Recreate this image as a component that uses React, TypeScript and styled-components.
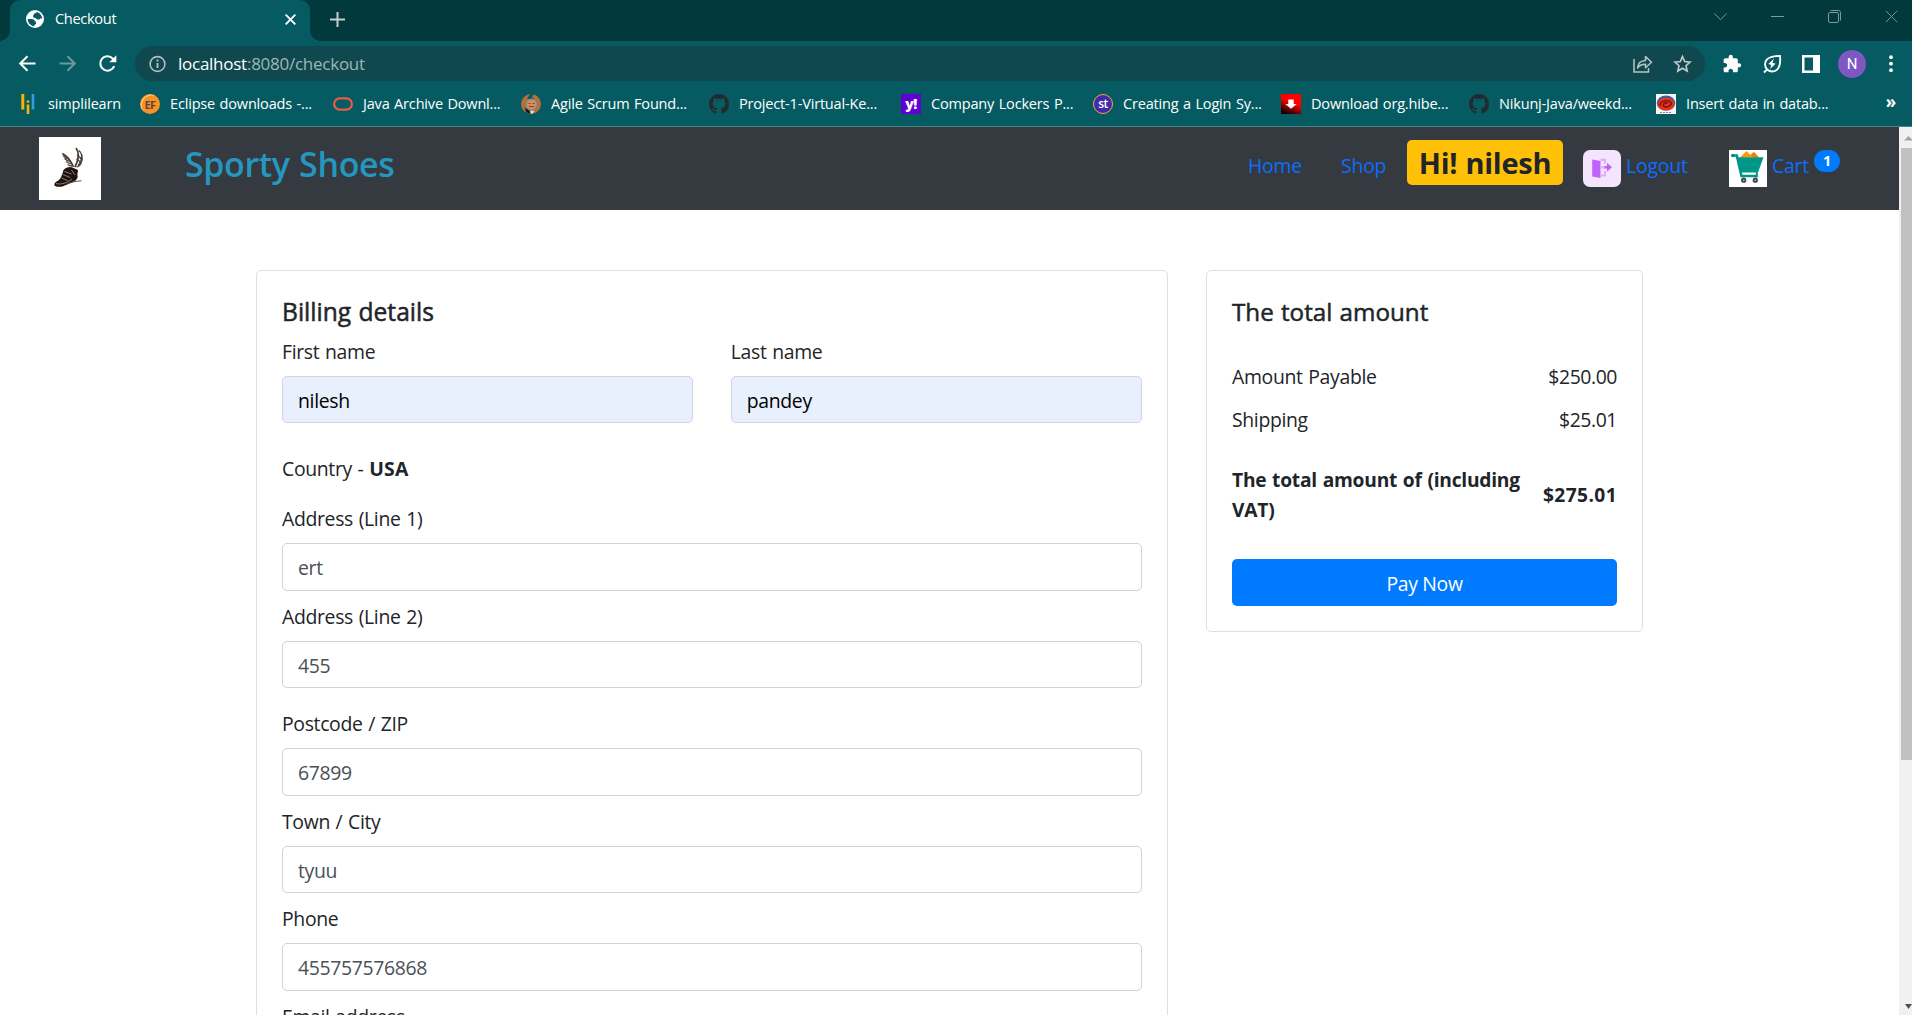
import React from 'react';
import styled, { createGlobalStyle } from 'styled-components';

const GlobalStyle = createGlobalStyle`
  * { box-sizing: border-box; }
  html, body { margin: 0; padding: 0; overflow: hidden; background: #fff; }
  body {
    font-family: "Open Sans", "Noto Sans", sans-serif;
    font-size: 19.4px;
    line-height: 30px;
    letter-spacing: -0.017em;
    word-spacing: 0.05em;
    color: #212529;
  }
  svg { display: block; flex: none; }
`;

const Window = styled.div`
  width: 1912px;
  height: 1015px;
  display: flex;
  flex-direction: column;
  overflow: hidden;
`;

/* ---------- browser chrome ---------- */

const TabStrip = styled.div`
  height: 41px;
  flex: none;
  display: flex;
  align-items: flex-start;
  background: #02393d;
`;

const Tab = styled.div`
  position: relative;
  width: 300px;
  height: 41px;
  margin-left: 10px;
  padding: 0 14px 3px 16px;
  display: flex;
  align-items: center;
  gap: 11px;
  background: #055b61;
  border-radius: 10px 10px 0 0;

  &::before,
  &::after {
    content: "";
    position: absolute;
    bottom: 0;
    width: 10px;
    height: 10px;
  }
  &::before {
    left: -10px;
    background: radial-gradient(circle at 0 0, transparent 9.5px, #055b61 10px);
  }
  &::after {
    right: -10px;
    background: radial-gradient(circle at 100% 0, transparent 9.5px, #055b61 10px);
  }
`;

const TabTitle = styled.span`
  flex: 1;
  padding-bottom: 2px;
  font-size: 14.6px;
  line-height: 20px;
  color: #fff;
`;

const NewTab = styled.div`
  margin: 12px 0 0 20px;
`;

const WindowControls = styled.div`
  margin: 10px 14px 0 auto;
  display: flex;
  gap: 44px;
`;

const Toolbar = styled.div`
  height: 43px;
  flex: none;
  display: flex;
  align-items: center;
  padding: 2px 18px 0 18px;
  background: #055b61;
`;

const NavButtons = styled.div`
  display: flex;
  gap: 20px;
  width: 117px;
`;

const AddressBar = styled.div`
  width: 1570px;
  height: 35px;
  padding: 0 12px 0 12px;
  display: flex;
  align-items: center;
  border-radius: 18px;
  background: #0f484e;
`;

const Url = styled.span`
  flex: 1;
  margin-left: 11px;
  font-size: 17px;
  line-height: 24px;
  letter-spacing: -0.015em;
  color: #9fb6b8;

  b {
    font-weight: 400;
    color: #fff;
  }
`;

const AddressActions = styled.div`
  display: flex;
  gap: 20px;
`;

const Extensions = styled.div`
  flex: 1;
  margin-left: 17px;
  display: flex;
  align-items: center;
  gap: 20px;
`;

const Avatar = styled.div`
  width: 28px;
  height: 28px;
  margin: 0 3px 0 -2px;
  border-radius: 50%;
  background: #7e57c2;
  color: #fff;
  font-family: Roboto, sans-serif;
  font-size: 15px;
  line-height: 28px;
  text-align: center;
`;

const Bookmarks = styled.div`
  height: 43px;
  flex: none;
  display: flex;
  align-items: flex-start;
  padding: 10px 0 0 18px;
  background: #055b61;
  border-bottom: 1px solid #45848a;
`;

const Bookmark = styled.div<{ $w: number }>`
  width: ${(p) => p.$w}px;
  display: flex;
  align-items: center;
  gap: 10px;
  white-space: nowrap;
  color: #fff;
`;

const BookmarkTitle = styled.span`
  height: 20px;
  font-size: 14.5px;
  line-height: 19px;
  letter-spacing: -0.012em;
`;

const BadgeText = styled.span<{ $bg: string; $fg: string; $ring?: string; $round?: boolean; $size?: number; $weight?: number }>`
  width: 20px;
  height: 20px;
  flex: none;
  display: flex;
  align-items: center;
  justify-content: center;
  border: ${(p) => (p.$ring ? `1.5px solid ${p.$ring}` : 'none')};
  border-radius: ${(p) => (p.$round ? '50%' : '0')};
  background: ${(p) => p.$bg};
  color: ${(p) => p.$fg};
  font-size: ${(p) => p.$size ?? 11}px;
  font-weight: ${(p) => p.$weight ?? 700};
  line-height: 1;
  letter-spacing: -0.5px;
`;

const More = styled.span`
  margin: -2px 16px 0 auto;
  font-size: 17px;
  font-weight: 700;
  line-height: 20px;
  color: #fff;
`;

/* ---------- page ---------- */

const Viewport = styled.div`
  flex: 1;
  min-height: 0;
  display: flex;
`;

const Page = styled.div`
  flex: 1;
  overflow: hidden;
`;

const ScrollTrack = styled.div`
  width: 13px;
  flex: none;
  display: flex;
  flex-direction: column;
  padding: 8px 0 5px 2px;
  overflow: hidden;
  background: #f1f1f1;
`;

const ScrollThumb = styled.div`
  height: 612px;
  margin: 7px 0 auto;
  background: #c1c1c1;
`;

const Navbar = styled.nav`
  height: 83px;
  display: flex;
  align-items: flex-start;
  padding-left: 39px;
  background: #343a40;
`;

const Logo = styled.div`
  width: 62px;
  height: 63px;
  margin-top: 10px;
  background: #fff;
`;

const Brand = styled.div`
  width: 1063px;
  margin: 16px 0 0 84px;
  font-size: 34px;
  font-weight: 600;
  line-height: 42px;
  letter-spacing: -0.011em;
  color: #2596be;
`;

const NavLink = styled.a<{ $w: number }>`
  width: ${(p) => p.$w}px;
  margin-top: 24px;
  letter-spacing: -0.01em;
  color: #0d6efd;
`;

const Greeting = styled.div`
  width: 156px;
  height: 45px;
  margin-top: 13px;
  border-radius: 5px;
  background: #ffc107;
  font-size: 29px;
  font-weight: 700;
  line-height: 45px;
  letter-spacing: -0.01em;
  text-align: center;
`;

const NavIcon = styled.div<{ $ml: number; $bg: string; $radius?: number }>`
  width: 38px;
  height: 37px;
  margin: 23px 5px 0 ${(p) => p.$ml}px;
  border-radius: ${(p) => p.$radius ?? 0}px;
  background: ${(p) => p.$bg};
`;

const CartCount = styled.span`
  width: 26px;
  height: 22px;
  margin-top: 23px;
  border-radius: 11px;
  background: #007bff;
  color: #fff;
  font-size: 14.5px;
  font-weight: 700;
  line-height: 21px;
  text-align: center;
`;

const Columns = styled.div`
  display: flex;
  align-items: flex-start;
  gap: 38px;
  padding: 59.75px 0 0 256px;
`;

const Card = styled.section<{ $w: number }>`
  width: ${(p) => p.$w}px;
  padding: 25px;
  border: 1px solid #dfdfdf;
  border-radius: 5px;
  background: #fff;
`;

const Heading = styled.h5<{ $mb: number; $size: number }>`
  height: 30px;
  margin: 0 0 ${(p) => p.$mb}px;
  font-size: ${(p) => p.$size}px;
  font-weight: 400;
  line-height: 32px;
  letter-spacing: 0;
  -webkit-text-stroke: 0.5px #212529;
`;

const NameRow = styled.div`
  display: grid;
  grid-template-columns: 1fr 1fr;
  gap: 37.5px;
  margin-bottom: 30px;
`;

const Field = styled.div<{ $mb?: number }>`
  margin-bottom: ${(p) => p.$mb ?? 10}px;
`;

const Label = styled.label`
  display: block;
  height: 30px;
  margin-bottom: 10px;
  line-height: 31.5px;
`;

const Input = styled.div<{ $filled?: boolean }>`
  height: 47.5px;
  padding: 9px 15px 0;
  border: 1px solid #ced4da;
  border-radius: 5px;
  background: ${(p) => (p.$filled ? '#e8f0fe' : '#fff')};
  color: ${(p) => (p.$filled ? '#000' : '#495057')};
`;

const Country = styled.p`
  height: 30px;
  margin: 0 0 20px;
  line-height: 32px;

  b {
    letter-spacing: 0.01em;
  }
`;

const AmountRow = styled.div<{ $mb: number; $bold?: boolean }>`
  display: flex;
  align-items: center;
  justify-content: space-between;
  margin-bottom: ${(p) => p.$mb}px;
  font-weight: ${(p) => (p.$bold ? 700 : 400)};
  font-size: ${(p) => (p.$bold ? 19.2 : 19.4)}px;
  letter-spacing: ${(p) => (p.$bold ? -0.012 : -0.017)}em;

  span:first-child {
    max-width: 300px;
  }
  span:last-child {
    letter-spacing: ${(p) => (p.$bold ? 0.02 : -0.022)}em;
  }
`;

const PayButton = styled.button`
  display: block;
  width: 100%;
  height: 47px;
  padding: 3px 0 0;
  border: 0;
  border-radius: 5px;
  background: #007bff;
  color: #fff;
  font: inherit;
  letter-spacing: inherit;
`;

/* ---------- drawings ---------- */

const GlobeIcon = () => (
  <svg width="18" height="18" viewBox="0 0 24 24">
    <path
      fill="#fff"
      d="M12 0a12 12 0 1 0 0 24 12 12 0 0 0 0-24z"
    />
    <path
      fill="#055b61"
      d="M2.400 12h5.200c2.600 0 4.200 1.400 4.200 3.400h1.600v2.400c0 1.200-1 2-2.200 2v1.700C6.200 21.200 2.400 17.100 2.400 12zM14 2.700c4.300.9 7.500 4.700 7.600 9.100l-2.300-.9c-.8 1.700-2.800 2.200-4.600 1.300-1-.6-1-1.700-2.400-1.700-1.900 0-2.900-1-2.900-2.300 0-1.200 1.100-1.500 1.100-2.500 0-1.100 1-1.400 2-1.400.9 0 1.500-.6 1.500-1.600z"
    />
  </svg>
);

const CloseIcon = ({ size, color, width }: { size: number; color: string; width: number }) => (
  <svg width={size} height={size} viewBox="0 0 14 14">
    <path d="M.8.8l12.400 12.400M13.200.8L.8 13.200" stroke={color} strokeWidth={width} />
  </svg>
);

const ArrowIcon = ({ color, flip }: { color: string; flip?: boolean }) => (
  <svg width="20" height="20" viewBox="0 0 20 20">
    <path
      d="M17.500 9.500H2.500M9.500 2.200L2.200 9.500l7.300 7.300"
      fill="none"
      stroke={color}
      strokeWidth="2"
      transform={flip ? 'translate(19 0) scale(-1 1)' : undefined}
    />
  </svg>
);

const ReloadIcon = () => (
  <svg width="20" height="20" viewBox="0 0 20 20">
    <path d="M16.200 12.100A7.200 7.200 0 1 1 14.800 4.600L16 5.800" fill="none" stroke="#fff" strokeWidth="2.100" />
    <path d="M18.300 1.300v7h-7z" fill="#fff" />
  </svg>
);

const InfoIcon = () => (
  <svg width="20" height="20" viewBox="0 0 20 20">
    <circle cx="10.500" cy="10" r="7.400" fill="none" stroke="#b3c0c2" strokeWidth="1.600" />
    <path d="M10.500 9v5M10.500 5.600v1.900" stroke="#b3c0c2" strokeWidth="1.900" />
  </svg>
);

const ShareIcon = () => (
  <svg width="20" height="20" viewBox="0 0 20 20" fill="none" stroke="#b8c4c5" strokeWidth="1.500">
    <path d="M1 5v13h14.500v-4" />
    <path d="M4.500 14c.4-4.500 3-7.300 8-7.500V2.500l6 5.800-6 5.500V10.200C8.800 10 6.500 11.200 4.500 14z" strokeLinejoin="round" />
  </svg>
);

const StarIcon = () => (
  <svg width="20" height="20" viewBox="0 0 20 20">
    <path d="M9.500 2.600l2.200 5 5.400.5-4.100 3.600 1.200 5.300-4.700-2.800L4.800 17 6 11.700 1.900 8.100l5.400-.5z" fill="none" stroke="#c0cacb" strokeWidth="1.600" />
  </svg>
);

const PuzzleIcon = () => (
  <svg width="20" height="20" viewBox="0 0 24 24">
    <path
      fill="#fff"
      d="M20.500 11H19V7c0-1.100-.9-2-2-2h-4V3.500C13 2.120 11.880 1 10.500 1S8 2.120 8 3.500V5H4c-1.100 0-2 .9-2 2v3.800h1.500c1.500 0 2.700 1.200 2.700 2.700S5 16.200 3.500 16.200H2V20c0 1.100.9 2 2 2h3.800v-1.500c0-1.500 1.200-2.700 2.700-2.700s2.700 1.200 2.700 2.700V22H17c1.100 0 2-.9 2-2v-4h1.500c1.380 0 2.500-1.120 2.500-2.500S21.880 11 20.500 11z"
    />
  </svg>
);

const LeafIcon = () => (
  <svg width="20" height="20" viewBox="0 0 20 20">
    <path d="M18 1.900c.7 7-.2 11-2.600 13.400-2.900 2.900-7.500 2.800-10.200.2C2.500 12.800 2.200 8.300 5 5.400 7.400 3 11.500 2 18 1.900zM5.200 15.300L2 18.500" fill="none" stroke="#fff" strokeWidth="1.900" />
    <path d="M11.800 4.800L6.300 10l3 1-1.300 4 5.600-5.300-3.100-1z" fill="#fff" />
  </svg>
);

const SidePanelIcon = () => (
  <svg width="18" height="18" viewBox="0 0 18 18">
    <path d="M0 0h18v18H0zM2.500 2.500v13H11v-13z" fill="#fff" fillRule="evenodd" />
  </svg>
);

const DotsIcon = () => (
  <svg width="4" height="18" viewBox="0 0 4 18" fill="#fff">
    <circle cx="2" cy="2.200" r="1.900" />
    <circle cx="2" cy="8.700" r="1.900" />
    <circle cx="2" cy="15.200" r="1.900" />
  </svg>
);

const SimplilearnIcon = () => (
  <svg width="20" height="20" viewBox="0 0 20 20">
    <path d="M3.300 0h3v15.500h-3zM8.700 6.500h2.600v2.300H8.700zM8.700 10.500h2.600v9.500H8.700z" fill="#f7b500" />
    <path d="M13.700 0h2.600v15.500h-2.600z" fill="#2e9fe0" />
  </svg>
);

const EclipseIcon = () => (
  <BadgeText $bg="radial-gradient(circle at 60% 58%, #f7931e 58%, #ffc98a 64%, #f7931e 72%)" $fg="#5a4250" $round $size={11}>
    EF
  </BadgeText>
);

const OracleIcon = () => (
  <svg width="20" height="20" viewBox="0 0 20 20">
    <rect x="1.100" y="4.300" width="17.800" height="11.400" rx="5.700" fill="none" stroke="#ee5a4a" strokeWidth="2.200" />
  </svg>
);

const AgileIcon = () => (
  <svg width="20" height="20" viewBox="0 0 20 20">
    <circle cx="10" cy="10" r="10" fill="#b0713c" />
    <path d="M9 0l4 .3-2 3.200 3 1.500-4 1-4-1.500z" fill="#055b61" />
    <ellipse cx="10.500" cy="10.500" rx="5" ry="5.300" fill="#d98d5c" stroke="#8d9089" strokeWidth="1.200" />
    <path d="M7.500 9.500h2M11.500 9.500h2M8 12.500h5" stroke="#7b4526" strokeWidth="1" />
    <path d="M3.500 13.500l5 3.200 1 3.100-4-1.200z" fill="#16171a" />
    <path d="M9.500 16.500l4 .5-2 2.800-2-.5z" fill="#ddd" />
  </svg>
);

const GithubIcon = () => (
  <svg width="20" height="20" viewBox="0 0 16 16">
    <path
      fill="#24292e"
      d="M8 0C3.580 0 0 3.580 0 8c0 3.540 2.290 6.530 5.470 7.590.4.070.55-.17.55-.38 0-.19-.01-.82-.01-1.490-2.010.37-2.530-.49-2.690-.94-.09-.23-.48-.94-.82-1.130-.28-.15-.68-.52-.01-.53.63-.01 1.080.58 1.230.82.72 1.210 1.870.87 2.330.66.07-.52.28-.87.51-1.070-1.780-.2-3.640-.89-3.640-3.950 0-.87.31-1.590.82-2.150-.08-.2-.36-1.020.08-2.120 0 0 .67-.21 2.200.82.64-.18 1.320-.27 2-.27s1.360.09 2 .27c1.530-1.040 2.200-.82 2.200-.82.44 1.100.16 1.920.08 2.120.51.56.82 1.270.82 2.150 0 3.070-1.870 3.750-3.650 3.950.29.25.54.73.54 1.480 0 1.070-.01 1.930-.01 2.200 0 .21.15.46.55.38A8.010 8.010 0 0 0 16 8c0-4.420-3.580-8-8-8z"
    />
  </svg>
);

const DownloadIcon = () => (
  <svg width="20" height="20" viewBox="0 0 20 20">
    <defs>
      <linearGradient id="dl" x1="0.650" y1="0.300" x2="0.350" y2="1">
        <stop offset="0.200" stopColor="#f00" />
        <stop offset="1" stopColor="#100" />
      </linearGradient>
    </defs>
    <rect width="20" height="20" fill="url(#dl)" />
    <path d="M7.300 5.500h5.400v4.500h3L10 14.800 4.300 10h3z" fill="#fff" />
  </svg>
);

const DatabaseIcon = () => (
  <svg width="20" height="20" viewBox="0 0 20 20">
    <rect width="20" height="20" fill="#f6f6f8" />
    <ellipse cx="10" cy="9" rx="9.300" ry="7.500" fill="#2c62a8" />
    <ellipse cx="10" cy="10" rx="8.600" ry="6.600" fill="#e03420" />
    <path d="M4 12c-1-5 8-7 11-3.500 1.500 3-4 5.500-7 4-2-2 1-4.500 4-3.500" fill="none" stroke="#7c1210" strokeWidth="1.400" />
    <path d="M4 18.500h12" stroke="#888" strokeDasharray="2 1" />
  </svg>
);

/* Running shoe with two feathered wings rising from the heel. */
const ShoeLogo = () => (
  <svg width="62" height="63" viewBox="0 0 62 63">
    <g fill="none" stroke="#4b4038">
      <path d="M23.300 16.500c5 2.500 8 6 11.200 13.500" strokeWidth="1.800" />
      <path d="M24 18.500c2 2.500 4 3 6 3.500M25.500 21.500c2 2 4 2.500 6 2.800M27 24.500c2 1.500 3.500 2 5.500 2.300M28.500 27.500c1.500 1 3 1.500 4.500 1.500" strokeWidth="1.300" />
      <path d="M37 11c4 5 3 11-1 19" strokeWidth="1.800" />
      <path d="M40 13.500c3 3 3.500 6 1.500 9M42.500 17c1.500 3 .5 6-2.500 8.500M43.300 21c.5 3-2 5.500-4.500 7M42.500 25.500c-1 2.500-3 4-5 4.500M38 18l4.500 4M37.500 22l4.500 3.500" strokeWidth="1.200" />
    </g>
    <path d="M24.500 33c3.500-3.500 7-3.500 10-2l4.500 2-.7 5c1 2 0 4-2.300 6l-9 4c-4 2-8 2.500-11 1-1.500-1.500 0-4 2.500-5 3.500-2 4.500-5.500 6-11z" fill="#20130d" />
    <path d="M25.500 34.500l7 2.500M24 37.500l7 3M22.500 41l6 2.500M32.500 33l3.500 5M17 46.500c5 1.500 11-.5 16-4.500" stroke="#a59a8f" strokeWidth=".8" fill="none" />
    <path d="M28 47c5-2.300 9-2.700 14.500-3.200" stroke="#5d534b" strokeWidth="1" fill="none" />
  </svg>
);

const LogoutIcon = () => (
  <svg width="38" height="37" viewBox="0 0 38 37">
    <path d="M9.200 9.500l8.300 1.500v17L9.200 26.500z" fill="#bf63fb" />
    <path d="M17.500 9.800h4.500v4M17.500 25.500h4.500v-4.500" fill="none" stroke="#dfaffc" strokeWidth="2.200" />
    <path d="M18.500 17.300h4.500" stroke="#dfaffc" strokeWidth="2.600" />
    <path d="M21.500 17.300h3" stroke="#bf63fb" strokeWidth="2.600" />
    <path d="M24 12.800l5 4.500-5 4.500z" fill="#bf63fb" />
  </svg>
);

const CartIcon = () => (
  <svg width="38" height="37" viewBox="0 0 38 37">
    <path d="M11 7.500l6.500-6.500 4 4 3.500-3 5 5.500z" fill="#ff9800" />
    <path d="M21.500 5l3.500-3 5 5.500h-5.500z" fill="#f57c00" />
    <path d="M7.500 7.300h27l-5.500 15.200h-16.500z" fill="#009688" />
    <path d="M2.500 5.500h5.300l4.700 20.500h16" fill="none" stroke="#009688" strokeWidth="2.600" />
    <path d="M27.800 22v5.200" stroke="#009688" strokeWidth="2" />
    <path d="M2.500 4.200v2.600h2.500v-2.600z" fill="#00796b" />
    <circle cx="14.700" cy="30.200" r="2.600" fill="#37474f" />
    <circle cx="26.300" cy="30.200" r="2.600" fill="#37474f" />
    <circle cx="14.700" cy="30.200" r="1" fill="#90a4ae" />
    <circle cx="26.300" cy="30.200" r="1" fill="#90a4ae" />
  </svg>
);

const Caret = ({ up, color }: { up?: boolean; color: string }) => (
  <svg width="12" height="6" viewBox="0 0 12 6">
    <path d={up ? 'M3 5.500L7.500 1 12 5.500z' : 'M4 0h7L7.500 5z'} fill={color} />
  </svg>
);

/* ---------- data ---------- */

const bookmarks = [
  { title: 'simplilearn', width: 122, icon: <SimplilearnIcon /> },
  { title: 'Eclipse downloads -...', width: 193, icon: <EclipseIcon /> },
  { title: 'Java Archive Downl...', width: 188, icon: <OracleIcon /> },
  { title: 'Agile Scrum Found...', width: 188, icon: <AgileIcon /> },
  { title: 'Project-1-Virtual-Ke...', width: 192, icon: <GithubIcon /> },
  { title: 'Company Lockers P...', width: 192, icon: <BadgeText $bg="#5f01d1" $fg="#fff" $size={14} $weight={800}>y!</BadgeText> },
  { title: 'Creating a Login Sy...', width: 188, icon: <BadgeText $bg="#3f2ba8" $fg="#fff" $ring="#f3a73f" $round $size={12} $weight={600}>st</BadgeText> },
  { title: 'Download org.hibe...', width: 188, icon: <DownloadIcon /> },
  { title: 'Nikunj-Java/weekd...', width: 187, icon: <GithubIcon /> },
  { title: 'Insert data in datab...', width: 190, icon: <DatabaseIcon /> },
];

const addressFields = [
  { label: 'Address (Line 1)', value: 'ert', gap: 10 },
  { label: 'Address (Line 2)', value: '455', gap: 20 },
  { label: 'Postcode / ZIP', value: '67899', gap: 10 },
  { label: 'Town / City', value: 'tyuu', gap: 10 },
  { label: 'Phone', value: '455757576868', gap: 10 },
  { label: 'Email address', value: '', gap: 10 },
];

const TextField = ({ label, value, gap, filled }: { label: string; value: string; gap?: number; filled?: boolean }) => (
  <Field $mb={gap}>
    <Label>{label}</Label>
    <Input $filled={filled}>{value}</Input>
  </Field>
);

export default function App() {
  return (
    <Window>
      <GlobalStyle />
      <TabStrip>
        <Tab>
          <GlobeIcon />
          <TabTitle>Checkout</TabTitle>
          <CloseIcon size={11} color="#fff" width={2.4} />
        </Tab>
        <NewTab>
          <svg width="15" height="15" viewBox="0 0 15 15">
            <path d="M7.500 0v15M0 7.500h15" stroke="#c3cfd0" strokeWidth="2" />
          </svg>
        </NewTab>
        <WindowControls>
          <svg width="13" height="13" viewBox="0 0 13 13">
            <path d="M.4 3.500l6.100 6.200 6.100-6.200" fill="none" stroke="#7f9a9c" />
          </svg>
          <svg width="13" height="13" viewBox="0 0 13 13">
            <path d="M0 6.500h13" stroke="#7f9a9c" />
          </svg>
          <svg width="13" height="13" viewBox="0 0 13 13">
            <rect x=".5" y="2.500" width="10" height="10" rx="1.500" fill="none" stroke="#7f9a9c" />
            <path d="M2.500.5h8a2 2 0 0 1 2 2v8" fill="none" stroke="#7f9a9c" />
          </svg>
          <CloseIcon size={13} color="#7f9a9c" width={1} />
        </WindowControls>
      </TabStrip>

      <Toolbar>
        <NavButtons>
          <ArrowIcon color="#fff" />
          <ArrowIcon color="#6b9a9d" flip />
          <ReloadIcon />
        </NavButtons>
        <AddressBar>
          <InfoIcon />
          <Url>
            <b>localhost</b>:8080/checkout
          </Url>
          <AddressActions>
            <ShareIcon />
            <StarIcon />
          </AddressActions>
        </AddressBar>
        <Extensions>
          <PuzzleIcon />
          <LeafIcon />
          <SidePanelIcon />
          <Avatar>N</Avatar>
          <DotsIcon />
        </Extensions>
      </Toolbar>

      <Bookmarks>
        {bookmarks.map((b) => (
          <Bookmark key={b.title} $w={b.width}>
            {b.icon}
            <BookmarkTitle>{b.title}</BookmarkTitle>
          </Bookmark>
        ))}
        <More>»</More>
      </Bookmarks>

      <Viewport>
        <Page>
          <Navbar>
            <Logo>
              <ShoeLogo />
            </Logo>
            <Brand>Sporty Shoes</Brand>
            <NavLink $w={93}>Home</NavLink>
            <NavLink $w={66}>Shop</NavLink>
            <Greeting>Hi! nilesh</Greeting>
            <NavIcon $ml={20} $bg="#f4e4fd" $radius={7}>
              <LogoutIcon />
            </NavIcon>
            <NavLink $w={62}>Logout</NavLink>
            <NavIcon $ml={41} $bg="#fff">
              <CartIcon />
            </NavIcon>
            <NavLink $w={42}>Cart</NavLink>
            <CartCount>1</CartCount>
          </Navbar>

          <Columns>
            <Card $w={912}>
              <Heading $mb={10} $size={24.6}>Billing details</Heading>
              <NameRow>
                <TextField label="First name" value="nilesh" gap={0} filled />
                <TextField label="Last name" value="pandey" gap={0} filled />
              </NameRow>
              <Country>
                Country - <b>USA</b>
              </Country>
              {addressFields.map((f) => (
                <TextField key={f.label} {...f} />
              ))}
            </Card>

            <Card $w={437}>
              <Heading $mb={36} $size={24.2}>The total amount</Heading>
              <AmountRow $mb={13}>
                <span>Amount Payable</span>
                <span>$250.00</span>
              </AmountRow>
              <AmountRow $mb={30}>
                <span>Shipping</span>
                <span>$25.01</span>
              </AmountRow>
              <AmountRow $mb={34} $bold>
                <span>The total amount of (including VAT)</span>
                <span>$275.01</span>
              </AmountRow>
              <PayButton>Pay Now</PayButton>
            </Card>
          </Columns>
        </Page>

        <ScrollTrack>
          <Caret up color="#a3a3a3" />
          <ScrollThumb />
          <Caret color="#505050" />
        </ScrollTrack>
      </Viewport>
    </Window>
  );
}
